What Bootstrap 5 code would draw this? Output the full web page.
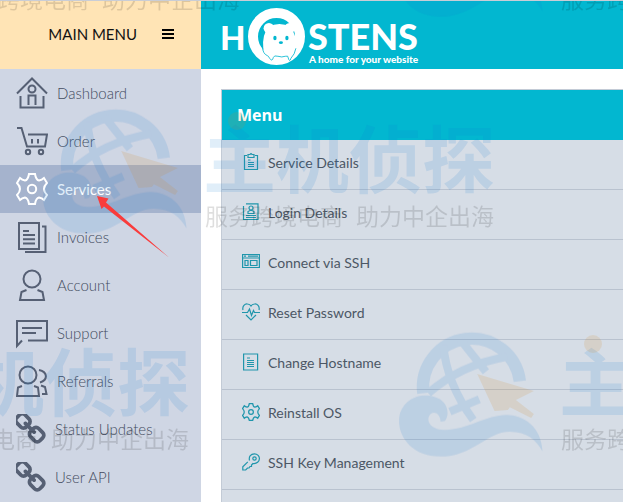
<!DOCTYPE html>
<html lang="en">
<head>
<meta charset="utf-8">
<meta name="viewport" content="width=device-width, initial-scale=1">
<title>Hostens</title>
<link href="https://cdn.jsdelivr.net/npm/bootstrap@5.3.0/dist/css/bootstrap.min.css" rel="stylesheet">
<style>
body{font-family:Lato,"Liberation Sans",sans-serif;font-weight:300;font-size:15px;line-height:24px;background:#fff}
.page{border-top:1px solid #c9cdd6;overflow:hidden}
.side{width:201px;background:#cfd6e4}
.side-head{height:68px;background:#ffe4b5;font-weight:400;color:#111;padding:0 27px 2px 0;gap:25px}
.side-head button{line-height:0;color:#000}
.side-link{height:48px;padding-left:16px;gap:9px;color:#434c60;text-decoration:none}
.side-link:hover{color:#434c60}
.side-link svg{width:32px;height:32px;fill:none;stroke:#566074;stroke-width:2}
.side-link svg.chain{width:30px;height:30px;fill:#566074;stroke:none}
.side-link.current{background:#a5b3cd;color:#fff;font-weight:400}
.side-link.current svg{stroke:#fff}
.brand-bar{height:68px;background:#02b7d0;padding:6px 16px}
.panel{margin:20px 0 0 20px;background:#d6dde6;border-top:1px solid #c3cbd6;border-left:1px solid #c3cbd6}
.panel h1{height:50px;background:#02b7d0;color:#fff;font:700 16px/24px "Open Sans",sans-serif;padding-left:15px}
.row-link{height:50px;border-bottom:1px solid #b9c2cf;padding:0 0 3px 20px;gap:8px;color:#4c5765;text-decoration:none;font-weight:400;font-size:14px}
.row-link:hover{color:#4c5765}
.row-link svg{width:18px;height:18px;fill:none;stroke:#2096ac;stroke-width:1.2;margin-bottom:3px}
.overlay{pointer-events:none}
</style>
<script src="https://cdn.jsdelivr.net/npm/bootstrap@5.3.0/dist/js/bootstrap.bundle.min.js"></script>
</head>
<body>
<div class="page position-relative d-flex min-vh-100">
  <nav class="side flex-shrink-0" aria-label="Main">
    <div class="side-head d-flex align-items-center justify-content-end">
      <span>MAIN MENU</span>
      <button type="button" class="border-0 bg-transparent p-0" aria-label="Toggle menu"><svg width="12" height="12" viewBox="0 0 12 12"><path d="M0 2h12M0 6h12M0 10h12" stroke="currentColor" stroke-width="2"/></svg></button>
    </div>
    <a class="side-link d-flex align-items-center" href="#"><svg viewBox="0 0 32 32"><path d="M1 16.500 16 1.500l15 15M4.500 19v11.500h23V19M12.500 28v-9.500h7V28"/><circle cx="16" cy="12" r="3.500"/></svg>Dashboard</a>
    <a class="side-link d-flex align-items-center" href="#"><svg viewBox="0 0 32 32"><path d="M1 3h4.500l5.500 18.500h18l2-12H12M16 14v4.500M22 14v4.500"/><circle cx="12" cy="27" r="2.200"/><circle cx="25" cy="27" r="2.200"/></svg>Order</a>
    <a class="side-link current d-flex align-items-center" href="#" aria-current="page"><svg viewBox="0 0 32 32"><path d="M13 1h6q1 6 4 6.500 3-.5 5-2.500l3 5q-3 3-3 6t3 6l-3 5q-2-2-5-2.500-3 .5-4 6.500h-6q-1-6-4-6.500-3 .5-5 2.500l-3-5q3-3 3-6t-3-6l3-5q2 2 5 2.500 3-.5 4-6.500z"/><circle cx="16" cy="16" r="4.200"/></svg>Services</a>
    <a class="side-link d-flex align-items-center" href="#"><svg viewBox="0 0 32 32"><path d="M3 2h20v26H3zM26 5.500h3.500V31H9M7 10h6M7 14h12M7 18.300h12M7 22.500h12"/></svg>Invoices</a>
    <a class="side-link d-flex align-items-center" href="#"><svg viewBox="0 0 32 32"><circle cx="16" cy="10" r="8.500"/><path d="m10.500 21-5 2L4 31h24l-1.500-8-5-2"/></svg>Account</a>
    <a class="side-link d-flex align-items-center" href="#"><svg viewBox="0 0 32 32"><path d="M12 23.500h19V4H1v25l5-5.500M6 11h20M6 16h14"/></svg>Support</a>
    <a class="side-link d-flex align-items-center" href="#"><svg viewBox="0 0 32 32"><circle cx="12" cy="10" r="8.500"/><path d="m6 21-4 1.500-1 8.500h22l-1-8.500-4-1.500M23 5c9 2 9 10 1 12.500M25 20.500l4 1.500 1.500 7H26"/></svg>Referrals</a>
    <a class="side-link d-flex align-items-center" href="#"><svg class="chain" viewBox="128 128 1536 1536"><path id="link" d="M1456 1216q0-40-28-68l-208-208q-28-28-68-28-42 0-72 32 3 3 19 18.500t21.500 21.500 15 19 13 25.500 3.500 27.500q0 40-28 68t-68 28q-15 0-27.500-3.500t-25.500-13-19-15-21.500-21.500-18.500-19q-33 31-33 73 0 40 28 68l206 207q27 27 68 27 40 0 68-26l147-146q28-28 28-67zm-703-705q0-40-28-68l-206-207q-28-28-68-28-39 0-68 27l-147 146q-28 28-28 67 0 40 28 68l208 208q27 27 68 27 42 0 72-31-3-3-19-18.500t-21.500-21.500-15-19-13-25.500-3.500-27.500q0-40 28-68t68-28q15 0 27.500 3.500t25.500 13 19 15 21.500 21.500 18.500 19q33-31 33-73zm895 705q0 120-85 203l-147 146q-83 83-203 83-121 0-204-85l-206-207q-83-83-83-203 0-123 88-209l-88-88q-86 88-208 88-120 0-204-84l-208-208q-84-84-84-204t85-203l147-146q83-83 203-83 121 0 204 85l206 207q83 83 83 203 0 123-88 209l88 88q86-88 208-88 120 0 204 84l208 208q84 84 84 204z"/></svg>Status Updates</a>
    <a class="side-link d-flex align-items-center" href="#"><svg class="chain" viewBox="128 128 1536 1536"><use href="#link"/></svg>User API</a>
  </nav>

  <main class="flex-fill d-flex flex-column">
    <header class="brand-bar">
      <a href="#" aria-label="Hostens" class="d-block"><svg class="d-block" width="214" height="62" viewBox="217 7 214 62" fill="#fff">
        <g font-family="Lato,sans-serif" font-weight="900"><text x="220" y="50" font-size="33">H</text><text x="308" y="50" font-size="36">STENS</text><text x="309" y="63" font-size="10">A home for your website</text></g>
        <circle cx="276.500" cy="36.500" r="23.500" fill="none" stroke="#fff" stroke-width="10"/>
        <g transform="translate(200 0) scale(.333)">
          <circle cx="207" cy="85" r="16"/><circle cx="269" cy="85" r="16"/>
          <path d="M205 82q34-20 66 0 20 26 19 58-4 24-14 30-4 16-11 3-20-6-40 0-10 16-18-2-14-4-17-26-4-40 15-63z"/>
          <g fill="#02b7d0"><ellipse cx="225" cy="114" rx="5" ry="7"/><ellipse cx="261" cy="114" rx="5" ry="7"/><ellipse cx="243" cy="128" rx="6" ry="4.500"/></g>
          <path d="M187 140q2 22 15 27 3 0 7 8 8 12 11-2 2-8 14-4 12 4 22 0 10-3 9 5 4 15 8 1 12-12 15-30" fill="none" stroke="#02b7d0" stroke-width="2.500"/>
        </g>
      </svg></a>
    </header>
    <section class="panel flex-fill">
      <h1 class="m-0 d-flex align-items-center">Menu</h1>
      <a class="row-link d-flex align-items-center" href="#"><svg viewBox="0 0 18 18"><path d="M5 2.500H2.500v14h13v-14H13M6 4.500v-3h2L9 .5l1 1h2v3zM6 7h2.500M6 9.500h6M6 11.500h6M6 13.500h6"/></svg>Service Details</a>
      <a class="row-link d-flex align-items-center" href="#"><svg viewBox="0 0 18 18"><path d="M4 .8h12v15.700H1.500V3M4 12.500h10M4 14.500h10M6 10.500v-2l2-1h2l2 1v2z"/><circle cx="9" cy="5" r="2"/></svg>Login Details</a>
      <a class="row-link d-flex align-items-center" href="#"><svg viewBox="0 0 18 18"><path d="M.6 1.500h16.800v13H.6zM.6 5h16.800M2 3.200h2M6 3.200h10M3 7.500h3v5H3zM8.500 7.500h6.500v5H8.500z"/></svg>Connect via SSH</a>
      <a class="row-link d-flex align-items-center" href="#"><svg viewBox="0 0 18 18"><path d="M1 7C0 3 3 .6 5.500 1 8 1.300 9 3 9 3s1-1.700 3.500-2C15 .6 18 3 17 7M4 12l5 5 5-5M0 9.500h5.500L7.500 6l2 6.500 2-5 1 2H18"/></svg>Reset Password</a>
      <a class="row-link d-flex align-items-center" href="#"><svg viewBox="0 0 18 18"><path d="M1.600 1h14v16h-14zM5 5h3M5 7.500h7M5 9.500h7M5 11.500h7M5 13.500h7"/></svg>Change Hostname</a>
      <a class="row-link d-flex align-items-center" href="#"><svg viewBox="0 0 32 32"><g stroke-width="2.200"><path d="M13 1h6q1 6 4 6.500 3-.5 5-2.500l3 5q-3 3-3 6t3 6l-3 5q-2-2-5-2.500-3 .5-4 6.500h-6q-1-6-4-6.500-3 .5-5 2.500l-3-5q3-3 3-6t-3-6l3-5q2 2 5 2.500 3-.5 4-6.500z"/><circle cx="16" cy="16" r="4.200"/></g></svg>Reinstall OS</a>
      <a class="row-link d-flex align-items-center" href="#"><svg viewBox="0 0 18 18"><path d="M7.500 7.500C6.500 3.500 9 .8 12.300.8s5.200 2.400 5.100 5-2.500 5.200-6.400 4.700L9.500 12v1.500H8L7 15H5.500l-1.800 2H.8v-3.200l5-5"/><circle cx="12.500" cy="5.500" r="1.700"/></svg>SSH Key Management</a>
    </section>
  </main>

  <svg class="overlay position-absolute top-0 start-0 w-100 h-100" aria-hidden="true">
    <defs>
      <g id="stamp">
        <g opacity=".13" fill="#1479d2">
          <g transform="translate(34 86) scale(.333)" stroke="#1479d2" stroke-width="24">
            <g fill="none"><path d="M100 250A145 145 0 0 1 390 214" stroke-width="37"/><path d="M115 250Q210 165 352 140M160 105q10 115 90 225M212 90l76 95M180 305l88-37"/></g>
            <path stroke="none" d="M165 333c13-15 11-48-15-65-40-23-100-13-120 42-15 60 30 130 120 130 100 0 140-75 210-75 50 0 80 25 98 60-3-75-58-110-108-110-60 0-120 45-185 45-45 0-60-30-43-48 13-9 28 0 30 23z"/>
          </g>
          <text x="203" y="186" font-family="'Noto Sans CJK SC',sans-serif" font-weight="700" font-size="73">主机侦探</text>
        </g>
        <g opacity=".14" fill="#d6881e"><path transform="translate(34 86) scale(.333)" d="m262 192 170 51-54 27 54 42-8 12-64-32-6 8-40 3z"/><circle cx="237" cy="120" r="9"/></g>
        <g opacity=".13" font-family="'Noto Sans CJK SC',sans-serif" font-weight="400" font-size="23"><text x="205" y="224">服务跨境电商</text><text x="356" y="224">助力中企出海</text></g>
      </g>
    </defs>
    <use href="#stamp"/>
    <use href="#stamp" x="356" y="223"/>
    <use href="#stamp" x="-305" y="223"/>
    <use href="#stamp" x="356" y="-217"/>
    <use href="#stamp" x="-254" y="-217"/>
    <path d="m97 195 11.500 2.500-2.500 4 63 55-65-51-2.500 2.500z" fill="#f93c3c"/>
  </svg>
</div>
</body>
</html>
